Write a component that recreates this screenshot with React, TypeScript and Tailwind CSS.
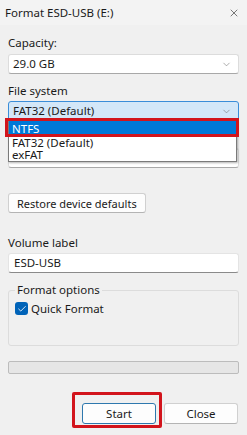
import { X, ChevronDown, Check } from "lucide-react";

const font = "font-['Segoe_UI','Noto_Sans',sans-serif]";

function Combo({ value, active }: { value?: string; active?: boolean }) {
  return (
    <div
      className={
        active
          ? "flex h-[20px] items-center justify-between rounded-[3px] border border-[#3a8dd8] bg-[#d3e7f8] pl-[4px] pr-[6px]"
          : "flex h-[20px] items-center justify-between rounded-[3px] border border-[#dcdcdc] border-b-[#a8a8a8] bg-white pl-[4px] pr-[6px]"
      }
    >
      <span className="text-[11.5px] leading-none text-[#1a1a1a]">{value}</span>
      <ChevronDown size={11} strokeWidth={1.2} className="text-[#6a6a6a]" />
    </div>
  );
}

export default function App() {
  return (
    <div
      className={`${font} relative flex h-[435px] w-[247px] flex-col bg-[#f0f0f0] text-[11.5px] text-[#1a1a1a]`}
    >
      {/* title bar */}
      <div className="flex h-[25px] items-center justify-between bg-[#f3f3f3] pl-[5px] pr-[7px]">
        <span className="text-[11.5px]">Format ESD-USB (E:)</span>
        <X size={12} strokeWidth={1.2} className="text-[#222]" />
      </div>

      <div className="flex flex-col px-[8px]">
        <span className="mt-[10px] leading-[16px]">Capacity:</span>
        <div className="mt-[3px]">
          <Combo value="29.0 GB" />
        </div>

        <span className="mt-[9px] leading-[16px]">File system</span>
        <div className="mt-[2px]">
          <Combo value="FAT32 (Default)" active />
        </div>

        {/* allocation unit size row, hidden under the open list */}
        <div className="mt-[9px] h-[16px]" />
        <div className="mt-[2px]">
          <Combo />
        </div>

        <div className="mt-[25px] flex">
          <button className="h-[20px] rounded-[3px] border border-[#d0d0d0] border-b-[#b4b4b4] bg-[#fdfdfd] px-[8px] text-[11px] leading-none">
            Restore device defaults
          </button>
        </div>

        <span className="mt-[22px] leading-[16px]">Volume label</span>
        <div className="mt-[2px] flex h-[20px] items-center rounded-[3px] border border-[#e4e4e4] border-b-[#8a8a8a] bg-white pl-[5px]">
          <span className="leading-none">ESD-USB</span>
        </div>

        {/* group box */}
        <div className="relative mt-[17px] h-[56px] rounded-[3px] border border-[#dcdcdc]">
          <span className="absolute left-[6px] top-[-9px] bg-[#f0f0f0] px-[2px] leading-[16px]">
            Format options
          </span>
          <label className="ml-[6px] mt-[11px] flex items-center gap-[3px]">
            <span className="flex h-[13px] w-[13px] items-center justify-center rounded-[3px] bg-[#0063b8]">
              <Check size={10} strokeWidth={2} className="text-white" />
            </span>
            <span className="leading-none">Quick Format</span>
          </label>
        </div>

        <div className="mt-[15px] h-[13px] rounded-[2px] border border-[#bcbcbc] bg-[#e6e6e6]" />

        <div className="mt-[29px] flex justify-end gap-[8px] pr-[1px]">
          <button className="h-[21px] w-[74px] rounded-[3px] border border-[#2e78ae] bg-[#fdfdfd] text-[11.5px] leading-none">
            Start
          </button>
          <button className="h-[21px] w-[74px] rounded-[3px] border border-[#d0d0d0] border-b-[#b4b4b4] bg-[#fdfdfd] text-[11.5px] leading-none">
            Close
          </button>
        </div>
      </div>

      {/* open dropdown list */}
      <div className="absolute left-[8px] top-[120px] flex h-[42px] w-[229px] flex-col border border-[#7a7a7a] bg-white shadow-[1px_1px_2px_rgba(0,0,0,0.3)]">
        <div className="flex h-[15px] items-center bg-[#0078d7] pl-[3px] text-white leading-none">NTFS</div>
        <div className="flex h-[13px] items-center pl-[3px] leading-none">FAT32 (Default)</div>
        <div className="flex h-[12px] items-center pl-[3px] leading-none">exFAT</div>
      </div>

      {/* highlight boxes */}
      <div className="absolute left-[5px] top-[118px] h-[19px] w-[234px] border-[3px] border-[#d2141c]" />
      <div className="absolute left-[72px] top-[392px] h-[36px] w-[90px] rounded-[2px] border-[3px] border-[#d2141c]" />
    </div>
  );
}
